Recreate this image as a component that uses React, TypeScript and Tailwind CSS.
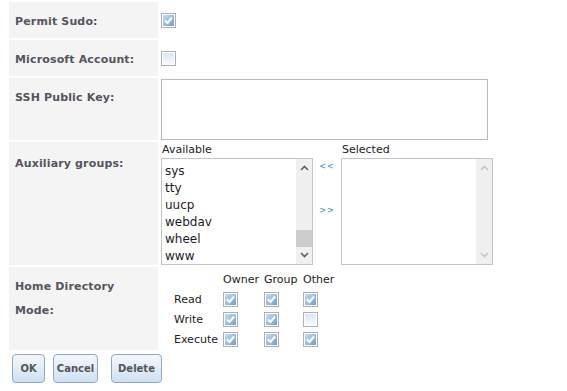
import React from "react";

const F = { fontFamily: '"DejaVu Sans", Verdana, sans-serif' };

function Box({ checked }: { checked: boolean }) {
  return (
    <div className="w-[15px] h-[15px] border border-[#a9b0bb] bg-white p-[1px] box-border">
      <div
        className={
          checked
            ? "w-full h-full bg-gradient-to-br from-[#c9def1] to-[#6f9fcf] flex items-center justify-center"
            : "w-full h-full bg-gradient-to-b from-[#dbe6f2] to-[#f8fbfd]"
        }
      >
        {checked && (
          <svg width="11" height="11" viewBox="0 0 11 11">
            <polyline points="2,5.5 4.5,8 9,2.5" fill="none" stroke="#ffffff" strokeWidth="2" />
          </svg>
        )}
      </div>
    </div>
  );
}

function Label({ children, extra }: { children: React.ReactNode; extra?: boolean }) {
  return (
    <div
      className={
        "w-[149px] shrink-0 bg-[#f4f4f4] pl-[6px] text-[11px] font-bold leading-[24px] tracking-[0.15px] text-[#545460] " +
        (extra ? "pt-[10px]" : "pt-[8px]")
      }
    >
      {children}
    </div>
  );
}

function ScrollBar({ disabled, thumb }: { disabled?: boolean; thumb?: boolean }) {
  const c = disabled ? "#c6c6c6" : "#606060";
  return (
    <div className="w-[16px] h-full bg-[#f0f0f0] flex flex-col items-center justify-between py-[6px] relative">
      <svg width="9" height="6" viewBox="0 0 9 6">
        <polyline points="1,5 4.5,1.5 8,5" fill="none" stroke={c} strokeWidth="1.6" />
      </svg>
      {thumb && <div className="absolute left-0 right-0 top-[71px] h-[17px] bg-[#cdcdcd]" />}
      <svg width="9" height="6" viewBox="0 0 9 6">
        <polyline points="1,1 4.5,4.5 8,1" fill="none" stroke={c} strokeWidth="1.6" />
      </svg>
    </div>
  );
}

export default function App() {
  const items = ["sys", "tty", "uucp", "webdav", "wheel", "www"];
  const perms: [string, boolean[]][] = [
    ["Read", [true, true, true]],
    ["Write", [true, true, false]],
    ["Execute", [true, true, true]],
  ];
  return (
    <div className="w-[567px] h-[391px] bg-white pt-[2px] pl-[9px]" style={F}>
      <div className="flex flex-col gap-[2px]">
        <div className="flex h-[36px] gap-[3px]">
          <Label>Permit Sudo:</Label>
          <div className="flex items-center pt-[1px]">
            <Box checked />
          </div>
        </div>
        <div className="flex h-[36px] gap-[3px]">
          <Label>Microsoft Account:</Label>
          <div className="flex items-center pt-[1px]">
            <Box checked={false} />
          </div>
        </div>
        <div className="flex h-[62px] gap-[3px]">
          <Label>SSH Public Key:</Label>
          <div className="pt-[1px]">
            <div className="w-[327px] h-[61px] border border-[#b5bac4] bg-white" />
          </div>
        </div>
        <div className="flex h-[123px] gap-[3px]">
          <Label extra>Auxiliary groups:</Label>
          <div className="flex text-[11px] text-[#222]">
            <div className="flex flex-col">
              <div className="h-[16px] leading-[16px] pl-[1px]">Available</div>
              <div className="w-[152px] h-[107px] border border-[#c4c4c4] flex overflow-hidden">
                <div className="flex-1 pt-[4px] pl-[3px] text-[12px] leading-[17px] text-[#1c1c28]">
                  {items.map((i) => (
                    <div key={i}>{i}</div>
                  ))}
                </div>
                <ScrollBar thumb />
              </div>
            </div>
            <div className="w-[28px] pt-[20px] flex flex-col items-center text-[8px] text-[#3b7fc4] tracking-[1px]">
              <div className="leading-[10px]">&lt;&lt;</div>
              <div className="leading-[10px] mt-[34px]">&gt;&gt;</div>
            </div>
            <div className="flex flex-col">
              <div className="h-[16px] leading-[16px] pl-[1px]">Selected</div>
              <div className="w-[152px] h-[107px] border border-[#c4c4c4] flex justify-end">
                <ScrollBar disabled />
              </div>
            </div>
          </div>
        </div>
        <div className="flex h-[83px] gap-[3px]">
          <Label>
            Home Directory
            <br />
            Mode:
          </Label>
          <div className="pt-[5px] pl-[13px] text-[11px] text-[#222]">
            <div className="grid grid-cols-[49px_41px_39px_40px] items-center">
              <div className="h-[16px]" />
              <div className="leading-[16px]">Owner</div>
              <div className="leading-[16px]">Group</div>
              <div className="leading-[16px]">Other</div>
              {perms.map(([name, vals]) => (
                <React.Fragment key={name}>
                  <div className="h-[20px] leading-[20px] pt-[2px]">{name}</div>
                  {vals.map((v, k) => (
                    <div key={k} className="h-[20px] flex items-center pt-[2px]">
                      <Box checked={v} />
                    </div>
                  ))}
                </React.Fragment>
              ))}
            </div>
          </div>
        </div>
      </div>
      <div className="flex pt-[4px] pl-[3px] text-[10px] font-bold text-[#555]">
        <button className="w-[33px] h-[29px] rounded-[4px] border border-[#8aa9cc] bg-gradient-to-b from-[#f4f8fd] to-[#cfe0f3] text-[#555]">
          OK
        </button>
        <button className="ml-[8px] w-[45px] h-[29px] rounded-[4px] border border-[#8aa9cc] bg-gradient-to-b from-[#f4f8fd] to-[#cfe0f3] text-[#555]">
          Cancel
        </button>
        <button className="ml-[13px] w-[51px] h-[29px] rounded-[4px] border border-[#8aa9cc] bg-gradient-to-b from-[#f4f8fd] to-[#cfe0f3] text-[#555]">
          Delete
        </button>
      </div>
    </div>
  );
}
